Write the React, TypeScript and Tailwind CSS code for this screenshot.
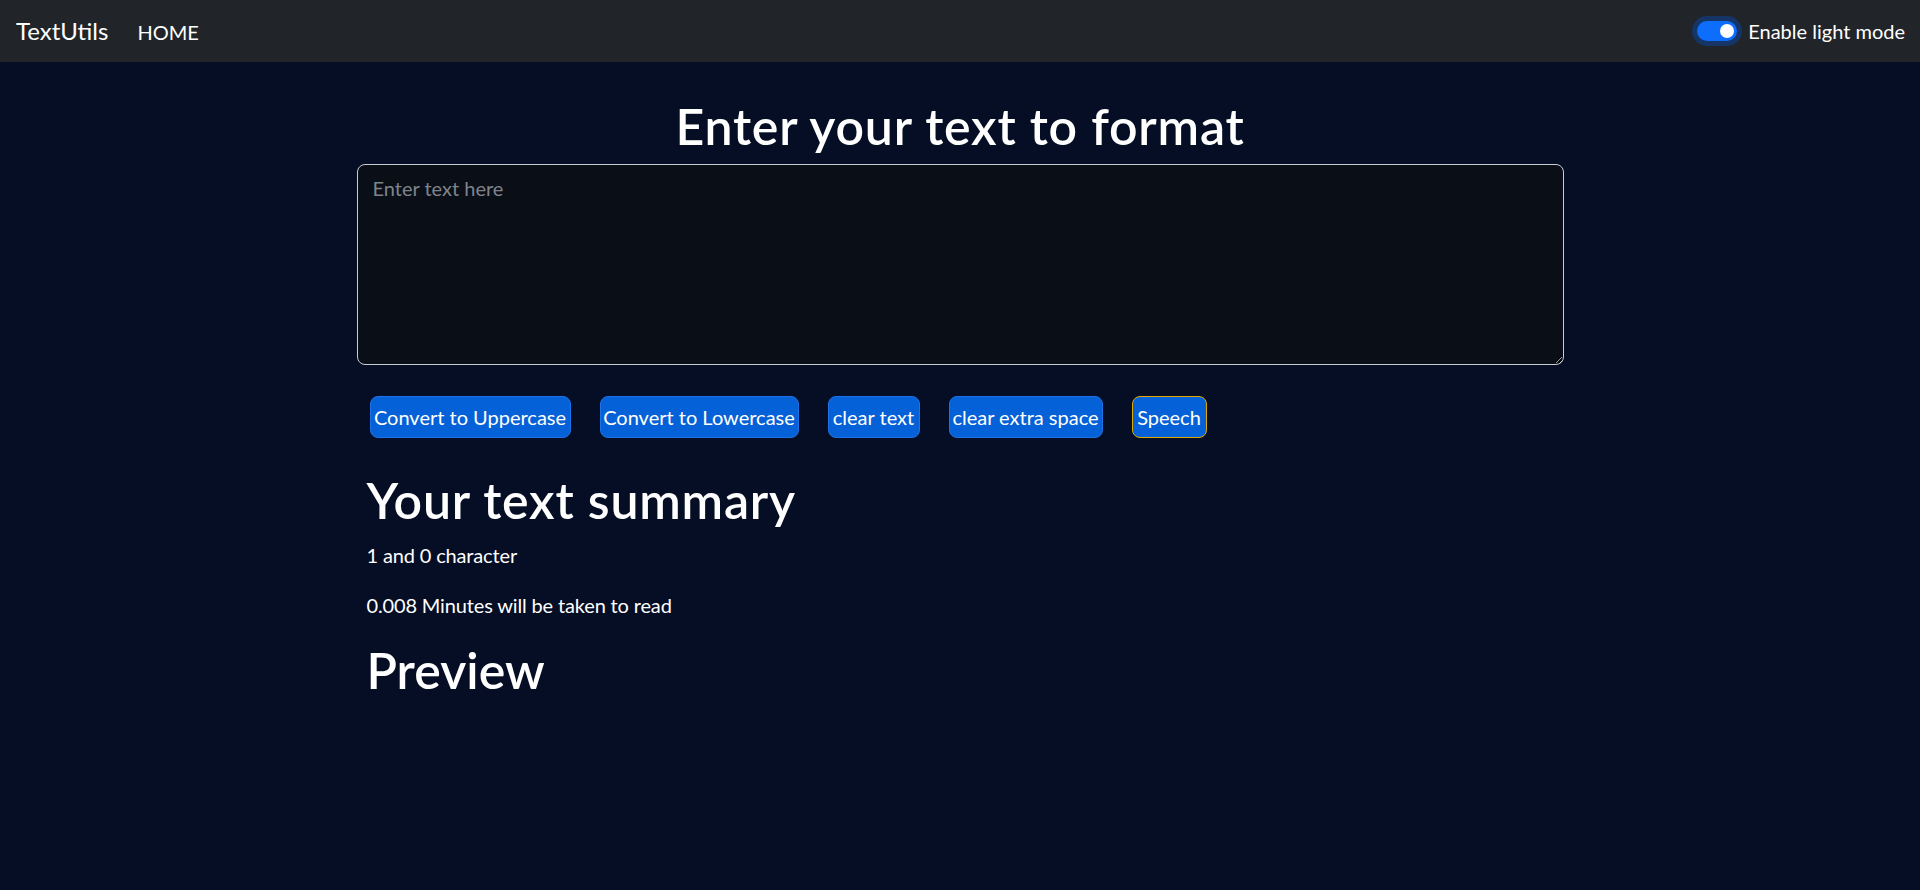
import React, { useState } from 'react';

const FONT = { fontFamily: 'Lato, "Open Sans", "Liberation Sans", sans-serif' };

const buttons = [
  { label: 'Convert to Uppercase', w: 'w-[201px]', ring: 'border-[#1f72e6]' },
  { label: 'Convert to Lowercase', w: 'w-[199px]', ring: 'border-[#1f72e6]' },
  { label: 'clear text', w: 'w-[92px]', ring: 'border-[#1f72e6]' },
  { label: 'clear extra space', w: 'w-[154px]', ring: 'border-[#1f72e6]' },
  { label: 'Speech', w: 'w-[75px]', ring: 'border-[#e0a800]' },
];

export default function App() {
  const [text, setText] = useState('');

  return (
    <div className="min-h-screen bg-[#050e24] text-white" style={FONT}>
      {/* navbar */}
      <nav className="h-[62px] bg-[#212529] flex items-center justify-between pl-4 pr-[15px]">
        <div className="flex items-center">
          <span className="text-[24px] leading-none">TextUtils</span>
          <span className="ml-[29px] text-[20px] leading-none mt-[2px]">HOME</span>
        </div>
        <div className="flex items-center gap-[11px]">
          <div className="w-[40px] h-[20px] rounded-full bg-[#0d6efd] ring-[5px] ring-[#153566] flex items-center justify-end pr-[3px]">
            <div className="w-[14px] h-[14px] rounded-full bg-white" />
          </div>
          <span className="text-[20px] leading-none">Enable light mode</span>
        </div>
      </nav>

      <main className="w-[1207px] mx-auto">
        <h1 className="mt-[34px] text-center text-[50px] leading-[60px] font-semibold tracking-[0.8px]">
          Enter your text to format
        </h1>
        <textarea
          value={text}
          onChange={(e) => setText(e.target.value)}
          placeholder="Enter text here"
          className="mt-[8px] block w-full h-[201px] rounded-lg border border-[#c9cdd2] bg-[#0a0e17] px-[15px] py-[8px] text-[20px] leading-[30px] text-white placeholder:text-[#7f848b] outline-none"
          style={FONT}
        />

        <div className="mt-[31px] flex gap-[29px] pl-[13px]">
          {buttons.map((b) => (
            <button
              key={b.label}
              className={`${b.w} h-[42px] rounded-lg border ${b.ring} bg-[#0561d7] text-[20px] leading-[30px] text-white whitespace-nowrap`}
            >
              {b.label}
            </button>
          ))}
        </div>

        <section className="pl-[10px]">
          <h2 className="mt-[32px] text-[50px] leading-[60px] font-semibold tracking-[0.8px]">Your text summary</h2>
          <p className="mt-[10px] text-[20px] leading-[30px] tracking-[-0.15px]">1 and 0 character</p>
          <p className="mt-[20px] text-[20px] leading-[30px] tracking-[-0.15px]">0.008 Minutes will be taken to read</p>
          <h2 className="mt-[20px] text-[50px] leading-[60px] font-semibold">Preview</h2>
        </section>
      </main>
    </div>
  );
}
